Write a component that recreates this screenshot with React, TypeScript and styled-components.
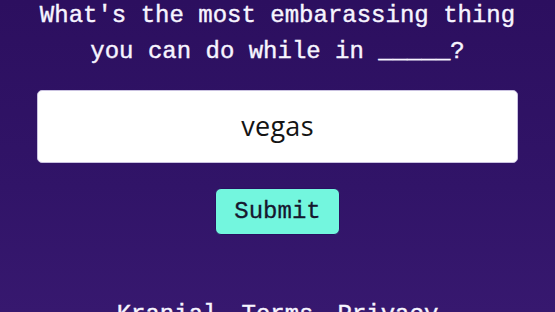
import React from "react";
import styled, { createGlobalStyle } from "styled-components";

const Global = createGlobalStyle`
  html, body {
    margin: 0;
    padding: 0;
    height: 100%;
    overflow: hidden;
  }
  body {
    background: linear-gradient(180deg, #2c0f5f 0%, #311468 60%, #37186f 100%);
    font-family: "Liberation Mono", "DejaVu Sans Mono", monospace;
  }
`;

const Page = styled.main`
  display: flex;
  flex-direction: column;
  align-items: center;
  padding: 0 37px;
  margin-top: -2px;
`;

const Question = styled.h1`
  margin: 0;
  max-width: 500px;
  text-align: center;
  font-family: "Liberation Mono", "DejaVu Sans Mono", monospace;
  font-weight: 400;
  font-size: 24px;
  line-height: 36px;
  color: #f7f5ff;
  -webkit-text-stroke: 0.4px #f7f5ff;
`;

const Answer = styled.input`
  box-sizing: border-box;
  width: 100%;
  height: 73px;
  margin-top: 20px;
  border: 1px solid #c9c1e0;
  border-radius: 5px;
  background: #ffffff;
  text-align: center;
  font-family: "Open Sans", "Liberation Sans", sans-serif;
  font-size: 27px;
  letter-spacing: 0.3px;
  color: #141414;
  outline: none;
  padding: 0 0 2px;
`;

const SubmitButton = styled.button`
  box-sizing: border-box;
  margin-top: 25px;
  height: 47px;
  padding: 0 18px;
  border: 1px solid #2a1060;
  border-radius: 6px;
  background: #73f6de;
  color: #16172e;
  font-family: "Liberation Mono", "DejaVu Sans Mono", monospace;
  font-size: 24px;
  -webkit-text-stroke: 0.3px #16172e;
  cursor: pointer;
`;

const Footer = styled.nav`
  display: flex;
  gap: 24px;
  margin-top: 62px;
`;

const FooterLink = styled.a`
  font-family: "Liberation Mono", "DejaVu Sans Mono", monospace;
  font-size: 24px;
  line-height: 36px;
  color: #f7f5ff;
  -webkit-text-stroke: 0.4px #f7f5ff;
  text-decoration: none;
`;

export default function App() {
  return (
    <>
      <Global />
      <Page>
        <Question>What's the most embarassing thing you can do while in _____?</Question>
        <Answer defaultValue="vegas" />
        <SubmitButton>Submit</SubmitButton>
        <Footer>
          <FooterLink href="#">Kranial</FooterLink>
          <FooterLink href="#">Terms</FooterLink>
          <FooterLink href="#">Privacy</FooterLink>
        </Footer>
      </Page>
    </>
  );
}
